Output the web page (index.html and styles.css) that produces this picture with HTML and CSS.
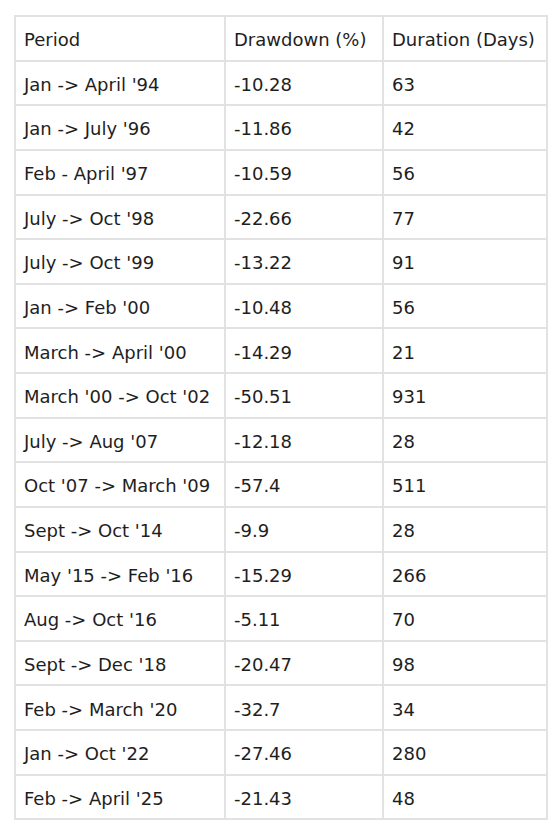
FILE: index.html
```html
<!DOCTYPE html>
<html>
<head>
<meta charset="utf-8">
<link rel="stylesheet" href="styles.css">
</head>
<body>
<div class="wrap">
<table class="dd">
<colgroup><col class="c1"><col class="c2"><col class="c3"></colgroup>
<thead>
<tr><th>Period</th><th>Drawdown (%)</th><th>Duration (Days)</th></tr>
</thead>
<tbody>
<tr><td>Jan -&gt; April '94</td><td>-10.28</td><td>63</td></tr>
<tr><td>Jan -&gt; July '96</td><td>-11.86</td><td>42</td></tr>
<tr><td>Feb - April '97</td><td>-10.59</td><td>56</td></tr>
<tr><td>July -&gt; Oct '98</td><td>-22.66</td><td>77</td></tr>
<tr><td>July -&gt; Oct '99</td><td>-13.22</td><td>91</td></tr>
<tr><td>Jan -&gt; Feb '00</td><td>-10.48</td><td>56</td></tr>
<tr><td>March -&gt; April '00</td><td>-14.29</td><td>21</td></tr>
<tr><td>March '00 -&gt; Oct '02</td><td>-50.51</td><td>931</td></tr>
<tr><td>July -&gt; Aug '07</td><td>-12.18</td><td>28</td></tr>
<tr><td>Oct '07 -&gt; March '09</td><td>-57.4</td><td>511</td></tr>
<tr><td>Sept -&gt; Oct '14</td><td>-9.9</td><td>28</td></tr>
<tr><td>May '15 -&gt; Feb '16</td><td>-15.29</td><td>266</td></tr>
<tr><td>Aug -&gt; Oct '16</td><td>-5.11</td><td>70</td></tr>
<tr><td>Sept -&gt; Dec '18</td><td>-20.47</td><td>98</td></tr>
<tr><td>Feb -&gt; March '20</td><td>-32.7</td><td>34</td></tr>
<tr><td>Jan -&gt; Oct '22</td><td>-27.46</td><td>280</td></tr>
<tr><td>Feb -&gt; April '25</td><td>-21.43</td><td>48</td></tr>
</tbody>
</table>
</div>
</body>
</html>
```
FILE: styles.css
```css
html, body {
  margin: 0;
  padding: 0;
  background: #fff;
}
.wrap {
  padding: 15px 0 0 14px;
}
.dd {
  border-collapse: separate;
  border-spacing: 0;
  border: 1px solid #e2e2e2;
  table-layout: fixed;
  width: 534px;
  font-family: "DejaVu Sans", Verdana, sans-serif;
  font-size: 18px;
  line-height: 21px;
  color: #1e1e1e;
}
.c1 { width: 210px; }
.c2 { width: 158px; }
.c3 { width: 164px; }
.dd th, .dd td {
  border: 1px solid #e2e2e2;
  padding: 12.2px 8px 9.45px;
  text-align: left;
  font-weight: normal;
  white-space: nowrap;
}
```
